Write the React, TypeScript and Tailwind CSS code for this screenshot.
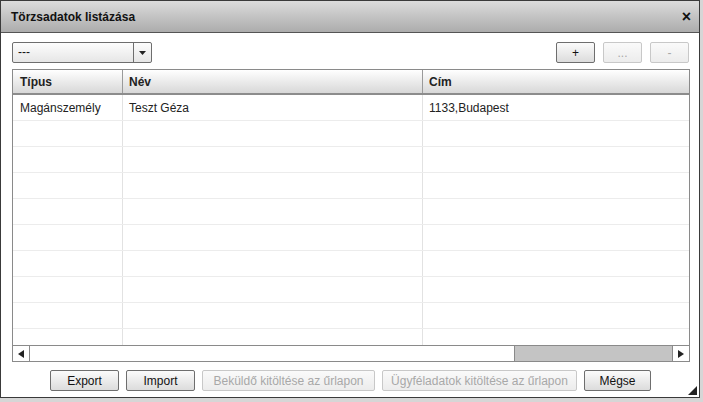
import React from "react";

const font = { fontFamily: '"Liberation Sans", Arial, sans-serif' };

function Btn({ children, w, disabled }: { children: React.ReactNode; w: string; disabled?: boolean }) {
  return (
    <div
      className={`${w} h-[21px] flex items-center justify-center text-[12px] rounded-[2px] border ${
        disabled
          ? "border-[#c8c8c8] text-[#a8a8a8] bg-gradient-to-b from-[#fafafa] to-[#ececec]"
          : "border-[#6e6e6e] text-[#111] bg-gradient-to-b from-[#fbfbfb] to-[#dcdcdc]"
      }`}
    >
      {children}
    </div>
  );
}

export default function App() {
  const rows = 9;
  return (
    <div className="w-[703px] h-[402px] bg-[#d6d6d6] overflow-hidden" style={font}>
      <div className="w-[700px] h-[398px] bg-white border border-[#3a3a3a] flex flex-col relative">
        {/* Title bar */}
        <div className="h-[32px] shrink-0 bg-gradient-to-b from-[#dcdcdc] to-[#acacac] border-b border-[#555] flex items-center justify-between pl-[10px] pr-[8px]">
          <span className="text-[12px] font-bold text-[#111]">Törzsadatok listázása</span>
          <span className="text-[16px] font-bold text-[#111] leading-none">×</span>
        </div>
        {/* Toolbar */}
        <div className="flex items-center justify-between pl-[11px] pr-[10px] pt-[9px]">
          <div className="w-[140px] h-[21px] border border-[#6e6e6e] rounded-[2px] flex bg-gradient-to-b from-[#fdfdfd] to-[#e6e6e6]">
            <div className="flex-1 text-[12px] pl-[5px] leading-[19px] text-[#111]">---</div>
            <div className="w-[18px] border-l border-[#6e6e6e] flex items-center justify-center">
              <svg width="7" height="4" viewBox="0 0 7 4"><path d="M0 0h7L3.5 4z" fill="#222" /></svg>
            </div>
          </div>
          <div className="flex gap-[8px]">
            <Btn w="w-[39px]">+</Btn>
            <Btn w="w-[39px]" disabled>...</Btn>
            <Btn w="w-[39px]" disabled>-</Btn>
          </div>
        </div>
        {/* Table */}
        <div className="mx-[11px] mt-[6px] w-[678px] h-[293px] border border-[#8a8a8a] flex flex-col">
          <div className="h-[25px] shrink-0 flex bg-gradient-to-b from-[#ffffff] to-[#d8d8d8] border-b-2 border-[#8c8c8c] text-[12px] font-bold text-[#222]">
            <div className="w-[110px] border-r border-[#9a9a9a] pl-[7px] flex items-center">Típus</div>
            <div className="w-[300px] border-r border-[#9a9a9a] pl-[6px] flex items-center">Név</div>
            <div className="flex-1 pl-[6px] flex items-center">Cím</div>
          </div>
          <div className="flex-1 flex flex-col overflow-hidden">
            {Array.from({ length: rows }).map((_, i) => (
              <div key={i} className="h-[26px] shrink-0 flex border-b border-[#ececec] text-[12px] text-[#222]">
                <div className="w-[110px] border-r border-[#e2e2e2] pl-[7px] flex items-center">{i === 0 ? "Magánszemély" : ""}</div>
                <div className="w-[300px] border-r border-[#e2e2e2] pl-[6px] flex items-center">{i === 0 ? "Teszt Géza" : ""}</div>
                <div className="flex-1 pl-[6px] flex items-center">{i === 0 ? "1133,Budapest" : ""}</div>
              </div>
            ))}
            <div className="flex-1 flex">
              <div className="w-[110px] border-r border-[#e2e2e2]" />
              <div className="w-[300px] border-r border-[#e2e2e2]" />
            </div>
          </div>
          {/* Scrollbar */}
          <div className="h-[16px] shrink-0 flex border-t border-[#8a8a8a] bg-white">
            <div className="w-[17px] border-r border-[#8a8a8a] flex items-center justify-center">
              <svg width="6" height="8" viewBox="0 0 6 8"><path d="M6 0v8L0 4z" fill="#222" /></svg>
            </div>
            <div className="flex-1 flex">
              <div className="w-[484px]" />
              <div className="flex-1 bg-[#c4c4c4] border-l border-[#8a8a8a]" />
            </div>
            <div className="w-[17px] border-l border-[#8a8a8a] flex items-center justify-center">
              <svg width="6" height="8" viewBox="0 0 6 8"><path d="M0 0v8L6 4z" fill="#222" /></svg>
            </div>
          </div>
        </div>
        {/* Bottom buttons */}
        <div className="flex gap-[7px] pl-[49px] pt-[8px]">
          <Btn w="w-[69px]">Export</Btn>
          <Btn w="w-[69px]">Import</Btn>
          <Btn w="w-[173px]" disabled>Beküldő kitöltése az űrlapon</Btn>
          <Btn w="w-[195px]" disabled>Ügyféladatok kitöltése az űrlapon</Btn>
          <Btn w="w-[67px]">Mégse</Btn>
        </div>
        <svg className="absolute right-[2px] bottom-[2px]" width="9" height="9" viewBox="0 0 9 9">
          <path d="M9 0v9H0z" fill="#222" />
        </svg>
      </div>
    </div>
  );
}
